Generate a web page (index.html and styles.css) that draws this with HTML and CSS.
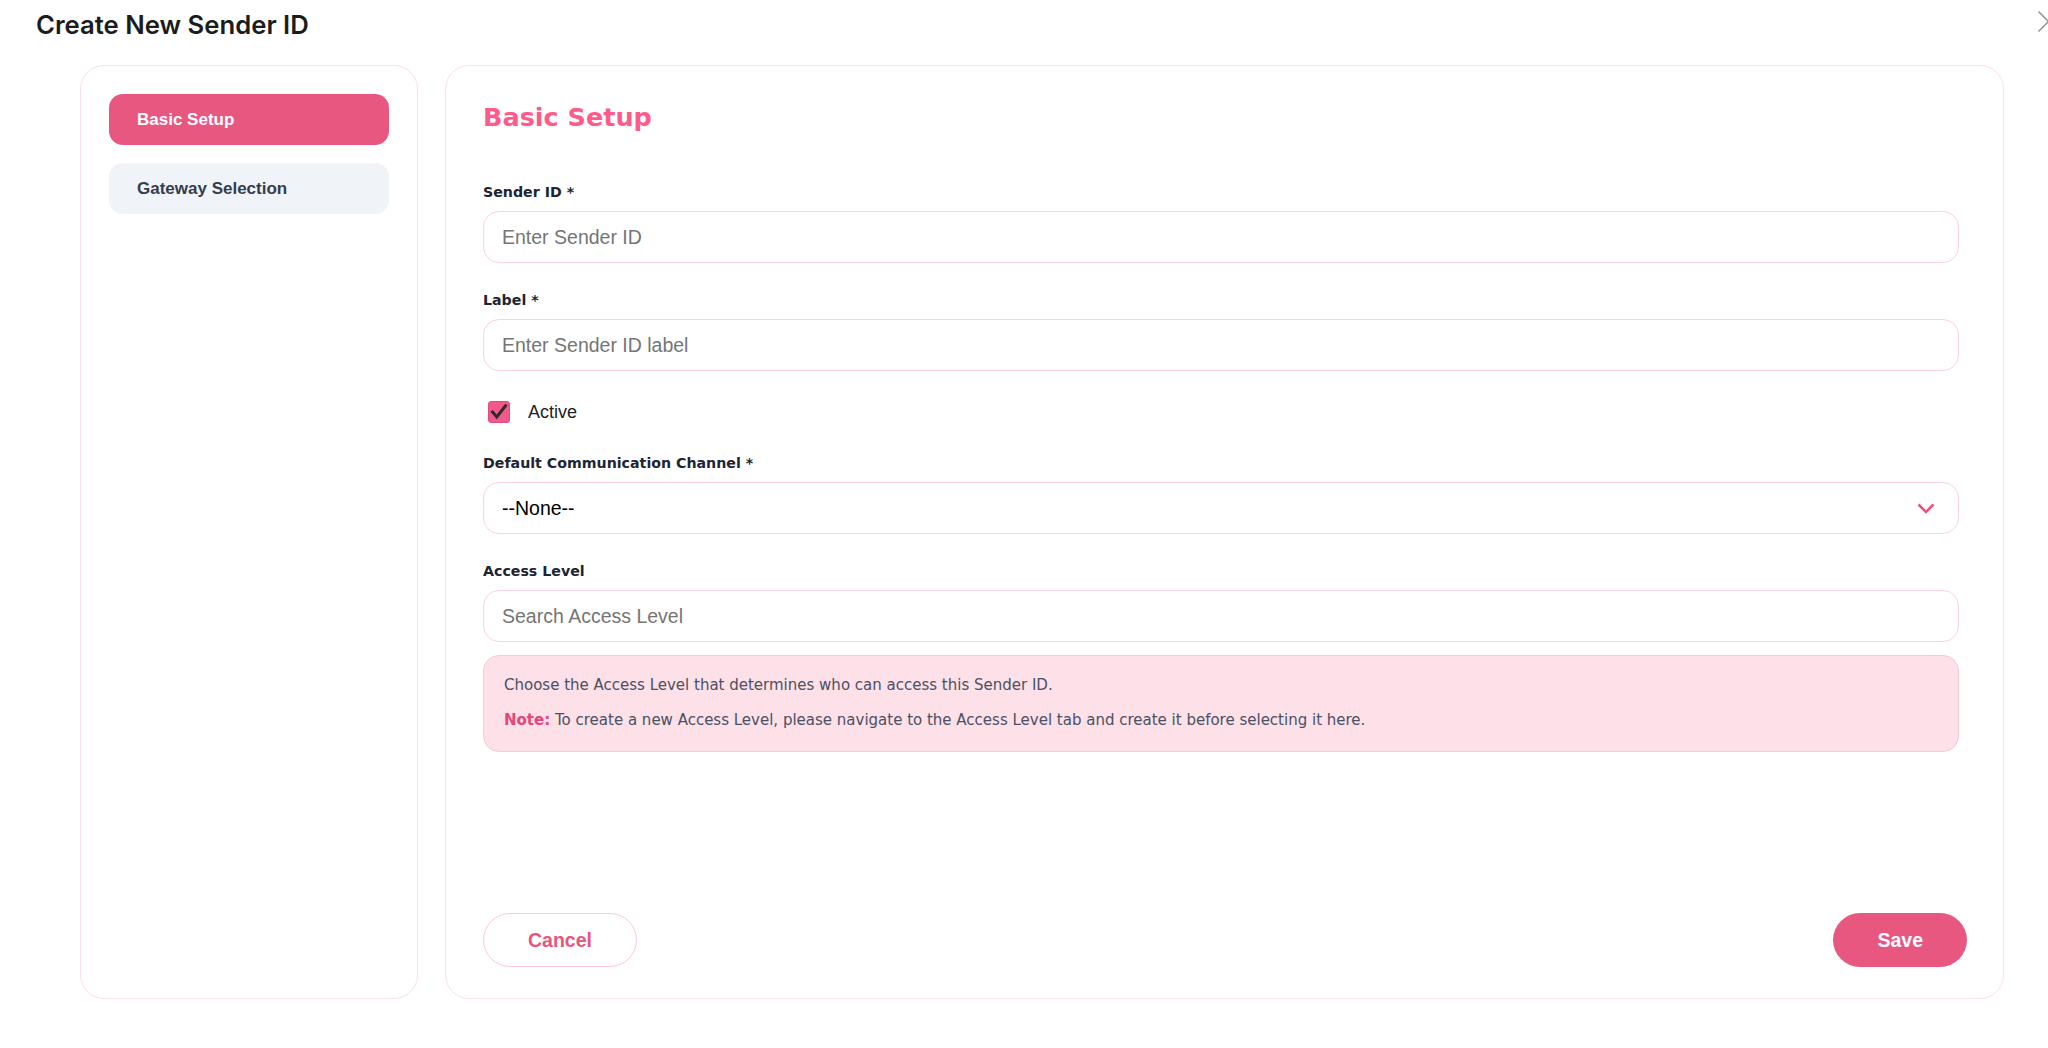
FILE: index.html
```html
<!DOCTYPE html>
<html lang="en">
<head>
  <meta charset="UTF-8">
  <meta name="viewport" content="width=device-width, initial-scale=1.0">
  <title>Create New Sender ID</title>
  <link rel="stylesheet" href="styles.css">
</head>
<body>

  <div class="modal">
    <header class="modal-header">
      <h1>Create New Sender ID</h1>
      <button class="close" type="button" aria-label="Close">
        <svg width="21" height="21" viewBox="0 0 21 21">
          <path d="M0.5 0.5 L20.5 20.5 M20.5 0.5 L0.5 20.5" stroke="#8c8c8c" stroke-width="1.4" fill="none"/>
        </svg>
      </button>
    </header>

    <div class="modal-body">
      <aside class="steps">
        <button class="step active" type="button">Basic Setup</button>
        <button class="step" type="button">Gateway Selection</button>
      </aside>

      <main class="panel">
        <form class="panel-form" onsubmit="event.preventDefault();">
          <h2>Basic Setup</h2>

          <div class="field">
            <label for="senderId">Sender ID *</label>
            <input class="input" type="text" id="senderId" placeholder="Enter Sender ID">
          </div>

          <div class="field">
            <label for="label">Label *</label>
            <input class="input" type="text" id="label" placeholder="Enter Sender ID label">
          </div>

          <label class="check-row">
            <span class="check-box">
              <svg width="22" height="22" viewBox="0 0 22 22">
                <path d="M4.5 11 L8.8 16 L17.5 4.8" stroke="#2b2b2b" stroke-width="3" fill="none" stroke-linecap="square"/>
              </svg>
            </span>
            <span>Active</span>
          </label>

          <div class="field">
            <label for="channel">Default Communication Channel *</label>
            <div class="select-wrap">
              <select class="input select" id="channel">
                <option>--None--</option>
                <option>SMS</option>
                <option>WhatsApp</option>
              </select>
              <svg class="chevron" width="18" height="11" viewBox="0 0 18 11">
                <path d="M1.5 1.5 L9 9 L16.5 1.5" stroke="#f0507f" stroke-width="2.6" fill="none"/>
              </svg>
            </div>
          </div>

          <div class="field">
            <label for="access">Access Level</label>
            <input class="input" type="text" id="access" placeholder="Search Access Level">
          </div>

          <div class="info">
            <p>Choose the Access Level that determines who can access this Sender ID.</p>
            <p><strong>Note:</strong> To create a new Access Level, please navigate to the Access Level tab and create it before selecting it here.</p>
          </div>
        </form>

        <div class="panel-footer">
          <button class="btn btn-cancel" type="button">Cancel</button>
          <button class="btn btn-save" type="button">Save</button>
        </div>
      </main>
    </div>
  </div>

</body>
</html>
```

FILE: styles.css
```css
body {
  margin: 0;
  font-family: "Liberation Sans", Arial, sans-serif;
  background-color: #fff;
  overflow: hidden;
}
.modal-header {
  position: relative;
  height: 65px;
  padding-left: 36px;
  box-sizing: border-box;
}
h1 {
  margin: 0;
  padding-top: 10px;
  font: 600 25.7px/30px Inter, sans-serif;
  color: #1c1c1c;
}
.close {
  position: absolute;
  top: 11px;
  right: -11px;
  width: 21px;
  height: 21px;
  padding: 0;
  border: none;
  background: none;
  cursor: pointer;
}
.close svg {
  display: block;
}
.modal-body {
  display: flex;
  gap: 27px;
  height: 934px;
  padding: 0 44px 0 80px;
}
.steps {
  width: 338px;
  box-sizing: border-box;
  border: 1px solid #fde0e9;
  border-radius: 24px;
  padding: 28px;
  display: flex;
  flex-direction: column;
  gap: 18px;
}
.step {
  height: 51px;
  border: none;
  border-radius: 14px;
  padding: 0 28px;
  text-align: left;
  font: bold 17px "Liberation Sans", Arial, sans-serif;
  background-color: #f0f3f8;
  color: #343d4f;
  cursor: pointer;
}
.step.active {
  background-color: #e8577f;
  color: #fff;
}
.panel {
  flex: 1;
  border: 1px solid #fde0e9;
  border-radius: 24px;
  display: flex;
  flex-direction: column;
}
.panel-form {
  flex: 1;
  padding: 35px 44px 0 37px;
}
h2 {
  margin: 0 0 49px;
  font: bold 25.5px/32px "DejaVu Sans", Verdana, sans-serif;
  color: #ff5a8a;
}
.field + .field {
  margin-top: 27px;
}
.field label {
  display: block;
  margin-bottom: 9px;
  font: bold 14.2px/20px "DejaVu Sans", Verdana, sans-serif;
  color: #1d2433;
}
.input {
  display: block;
  width: 100%;
  height: 52px;
  box-sizing: border-box;
  border: 1px solid #fcd3df;
  border-radius: 16px;
  padding: 0 18px;
  font: 19.5px "Liberation Sans", Arial, sans-serif;
  color: #000;
  background-color: #fff;
  outline: none;
}
.input::placeholder {
  color: #757575;
}
.check-row {
  display: flex;
  align-items: center;
  height: 24px;
  margin: 29px 0;
  padding-left: 5px;
  gap: 18px;
  font-size: 18px;
  color: #222;
  cursor: pointer;
}
.check-box {
  width: 22px;
  height: 22px;
  box-sizing: border-box;
  border-radius: 3px;
  background-color: #f2588a;
  border: 1px solid #e44a7c;
}
.check-box svg {
  display: block;
  margin: -1px;
}
.select-wrap {
  position: relative;
}
.select {
  appearance: none;
  -webkit-appearance: none;
  cursor: pointer;
}
.chevron {
  position: absolute;
  right: 24px;
  top: 21px;
  pointer-events: none;
}
.info {
  margin-top: 13px;
  padding: 12px 20px 13px;
  border: 1px solid #fbc6d5;
  border-radius: 16px;
  background-color: #fde0e8;
  font: 15px/35px "DejaVu Sans", Verdana, sans-serif;
  color: #4a5163;
}
.info p {
  margin: 0;
}
.info strong {
  color: #e8457a;
}
.panel-footer {
  display: flex;
  justify-content: space-between;
  padding: 0 36px 31px 37px;
}
.btn {
  height: 54px;
  padding: 0 44px;
  border-radius: 27px;
  font: bold 19.5px "Liberation Sans", Arial, sans-serif;
  cursor: pointer;
}
.btn-cancel {
  border: 1px solid #fbc9d8;
  background-color: #fff;
  color: #e8567f;
}
.btn-save {
  border: none;
  background-color: #e8577f;
  color: #fff;
}
```
